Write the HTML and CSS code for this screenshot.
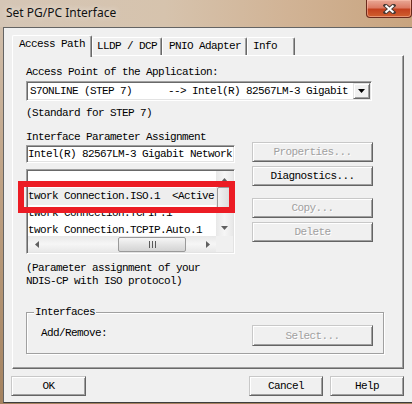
FILE: index.html
```html
<!DOCTYPE html>
<html>
<head>
<meta charset="utf-8">
<link rel="stylesheet" href="styles.css">
</head>
<body>
<div class="window">
  <div class="titlebar">
    <span class="title">Set PG/PC Interface</span>
    <div class="close">
      <svg width="13" height="10" viewBox="0 0 13 10"><path d="M2.5 1.5 L10.5 8.5 M10.5 1.5 L2.5 8.5" stroke="#4a3a34" stroke-width="4" stroke-linecap="square"/><path d="M2.5 1.5 L10.5 8.5 M10.5 1.5 L2.5 8.5" stroke="#fff" stroke-width="2"/></svg>
    </div>
  </div>
  <div class="client">
    <div class="tabs">
      <div class="tab tab-active tab-access">Access Path</div>
      <div class="tab tab-lldp">LLDP / DCP</div>
      <div class="tab tab-pnio">PNIO Adapter</div>
      <div class="tab tab-info">Info</div>
    </div>
    <div class="panel">
      <div class="label">Access Point of the Application:</div>
      <div class="combo">
        <span class="combo-text">S7ONLINE (STEP 7)      --> Intel(R) 82567LM-3 Gigabit</span>
        <span class="combo-btn"><svg width="7" height="4" viewBox="0 0 7 4"><path d="M0 0 H7 L3.5 4 Z" fill="#000"/></svg></span>
      </div>
      <div class="label label-std">(Standard for STEP 7)</div>
      <div class="label label-assign">Interface Parameter Assignment</div>
      <div class="mid">
        <div class="mid-left">
          <div class="field">Intel(R) 82567LM-3 Gigabit Network</div>
          <div class="listbox">
            <div class="rows">
              <div class="row"></div>
              <div class="row row-focus">twork Connection.ISO.1  &lt;Active.</div>
              <div class="row">twork Connection.TCPIP.1</div>
              <div class="row">twork Connection.TCPIP.Auto.1</div>
            </div>
            <div class="vscroll">
              <div class="sb-arrow"><svg width="7" height="4" viewBox="0 0 7 4"><path d="M3.5 0 L7 4 H0 Z" fill="#606060"/></svg></div>
              <div class="vthumb"></div>
              <div class="sb-arrow sb-down"><svg width="7" height="4" viewBox="0 0 7 4"><path d="M0 0 H7 L3.5 4 Z" fill="#606060"/></svg></div>
            </div>
            <div class="hscroll">
              <div class="sb-arrow sb-h"><svg width="4" height="7" viewBox="0 0 4 7"><path d="M0 3.5 L4 0 V7 Z" fill="#606060"/></svg></div>
              <div class="hthumb"><svg width="7" height="7" viewBox="0 0 7 7"><path d="M0.5 0 V7 M3.5 0 V7 M6.5 0 V7" stroke="#5a5a5a" stroke-width="1"/></svg></div>
              <div class="sb-arrow sb-h sb-right"><svg width="4" height="7" viewBox="0 0 4 7"><path d="M0 0 L4 3.5 L0 7 Z" fill="#606060"/></svg></div>
            </div>
            <div class="corner"></div>
            <div class="highlight"></div>
          </div>
        </div>
        <div class="mid-right">
          <button class="btn btn-side" disabled>Properties...</button>
          <button class="btn btn-side btn-diag">Diagnostics...</button>
          <button class="btn btn-side btn-copy" disabled>Copy...</button>
          <button class="btn btn-side btn-delete" disabled>Delete</button>
        </div>
      </div>
      <div class="note">(Parameter assignment of your<br>NDIS-CP with ISO protocol)</div>
      <div class="group">
        <span class="legend">Interfaces</span>
        <span class="add">Add/Remove:</span>
        <button class="btn btn-side btn-select" disabled>Select...</button>
      </div>
    </div>
    <div class="footer">
      <button class="btn btn-ok">OK</button>
      <button class="btn btn-cancel">Cancel</button>
      <button class="btn btn-help">Help</button>
    </div>
  </div>
</div>
</body>
</html>
```

FILE: styles.css
```css
html, body {
  margin: 0;
  padding: 0;
}
body {
  width: 412px;
  height: 404px;
  overflow: hidden;
  font-family: "Liberation Mono", "DejaVu Sans Mono", monospace;
  font-size: 11px;
  letter-spacing: -0.6px;
  color: #000;
}
.window {
  width: 412px;
  height: 404px;
  box-sizing: border-box;
  padding-bottom: 1px;
  display: flex;
  flex-direction: column;
  background: linear-gradient(180deg, #d3c3b2 0%, #bfa284 45%, #a4825f 100%);
}
.titlebar {
  height: 27px;
  flex: none;
  display: flex;
  justify-content: space-between;
  align-items: flex-start;
  background: linear-gradient(90deg, #d5c6b6 0%, #d6c3ad 40%, #d1b395 70%, #c8a47f 100%);
}
.title {
  font-family: "Noto Sans", "Open Sans", sans-serif;
  font-size: 12px;
  letter-spacing: 0;
  line-height: 16px;
  padding: 5px 0 0 6px;
  color: #111;
  text-shadow: 0 0 6px rgba(255, 255, 255, 0.8);
}
.close {
  width: 46px;
  height: 18px;
  box-sizing: border-box;
  display: flex;
  align-items: center;
  justify-content: center;
  border: 1px solid #6b2a1c;
  border-top: none;
  border-radius: 0 0 4px 4px;
  background: linear-gradient(180deg, #e9a896 0%, #dc7b64 45%, #c4411f 55%, #d0602f 100%);
  box-shadow: inset 0 0 0 1px rgba(255, 200, 180, 0.5);
}
.client {
  flex: 1;
  margin-left: 3px;
  background: #f0f0f0;
  border-top: 1px solid #646464;
  border-left: 1px solid #646464;
  border-bottom: 1px solid #3c3c3c;
  padding: 7px 0 0 8px;
  display: flex;
  flex-direction: column;
}
.tabs {
  display: flex;
  align-items: flex-end;
  height: 20px;
}
.tab {
  box-sizing: border-box;
  height: 18px;
  line-height: 12px;
  padding-top: 2px;
  white-space: pre;
  background: #f0f0f0;
  border-top: 1px solid #fff;
  border-left: 1px solid #fff;
  border-right: 1px solid #696969;
  box-shadow: inset -1px 0 #a0a0a0;
  border-radius: 2px 2px 0 0;
}
.tab-active {
  height: 22px;
  margin-bottom: -2px;
  position: relative;
  z-index: 1;
  padding-top: 2px;
}
.tab-access { width: 80px; padding-left: 6px; }
.tab-lldp { width: 70px; padding-left: 4px; }
.tab-pnio { width: 85px; padding-left: 6px; }
.tab-info { width: 48px; padding-left: 5px; }
.panel {
  width: 392px;
  height: 314px;
  box-sizing: border-box;
  border: 1px solid;
  border-color: #fff #696969 #696969 #fff;
  box-shadow: inset -1px -1px #a0a0a0;
  padding: 10px 0 0 13px;
}
.label {
  height: 12px;
  line-height: 12px;
  white-space: pre;
}
.label-std { margin-top: 6px; }
.label-assign { margin-top: 12px; }
.sunken {
  background: #fff;
}
.combo, .field, .listbox {
  box-sizing: border-box;
  background: #fff;
  border: 1px solid;
  border-color: #a0a0a0 #fff #fff #a0a0a0;
  box-shadow: inset 1px 1px #696969, inset -1px -1px #e3e3e3;
}
.combo {
  margin-top: 3px;
  width: 346px;
  height: 20px;
  display: flex;
  align-items: center;
  padding: 1px 1px 1px 2px;
}
.combo-text {
  flex: 1;
  white-space: pre;
  line-height: 14px;
  padding-left: 1px;
  overflow: hidden;
}
.combo-btn {
  width: 17px;
  height: 16px;
  box-sizing: border-box;
  display: flex;
  align-items: center;
  justify-content: center;
  background: #f0f0f0;
  border: 1px solid;
  border-color: #e3e3e3 #696969 #696969 #e3e3e3;
  box-shadow: inset 1px 1px #fff, inset -1px -1px #a0a0a0;
}
.mid {
  margin-top: -1px;
  display: flex;
  gap: 17px;
}
.mid-left {
  width: 209px;
  padding-top: 3px;
}
.field {
  width: 209px;
  height: 18px;
  line-height: 16px;
  padding-left: 1px;
  white-space: pre;
  overflow: hidden;
}
.listbox {
  position: relative;
  margin-top: 6px;
  width: 209px;
  height: 85px;
  padding: 1px;
  display: grid;
  grid-template-columns: 1fr 17px;
  grid-template-rows: 1fr 16px;
}
.rows {
  overflow: hidden;
  min-height: 0;
}
.row {
  height: 17px;
  line-height: 17px;
  white-space: pre;
  overflow: hidden;
}
.row-focus {
  background: #eeeeee;
}
.vscroll {
  display: flex;
  flex-direction: column;
  background: linear-gradient(90deg, #e8e8e8, #f6f6f6 50%, #e8e8e8);
  min-height: 0;
}
.sb-arrow {
  flex: none;
  width: 17px;
  height: 17px;
  display: flex;
  align-items: center;
  justify-content: center;
}
.sb-down {
  margin-top: auto;
}
.vthumb {
  margin-top: -1px;
  margin-left: 1px;
  width: 14px;
  height: 22px;
  box-sizing: border-box;
  border: 1px solid #9a9a9a;
  border-radius: 2px;
  background: linear-gradient(90deg, #f2f2f2, #dcdcdc);
}
.hscroll {
  display: flex;
  align-items: center;
  background: linear-gradient(180deg, #e8e8e8, #f6f6f6 50%, #e8e8e8);
}
.sb-h {
  height: 16px;
}
.sb-right {
  margin-left: auto;
}
.hthumb {
  margin-left: 73px;
  width: 68px;
  height: 15px;
  box-sizing: border-box;
  border: 1px solid #9a9a9a;
  border-radius: 2px;
  background: linear-gradient(180deg, #f6f6f6, #e4e4e4 50%, #d4d4d4);
  display: flex;
  align-items: center;
  justify-content: center;
}
.corner {
  background: #f0f0f0;
}
.highlight {
  position: absolute;
  left: -9px;
  top: 11px;
  width: 217px;
  height: 32px;
  box-sizing: border-box;
  border: 6px solid #ec1c24;
  pointer-events: none;
}
.mid-right {
  display: flex;
  flex-direction: column;
}
.btn {
  box-sizing: border-box;
  height: 20px;
  margin: 0;
  padding: 0;
  font: inherit;
  letter-spacing: inherit;
  color: #000;
  background: #f0f0f0;
  border: 1px solid;
  border-color: #c8c8c8 #646464 #646464 #c8c8c8;
  box-shadow: inset 1px 1px #fff, inset -1px -1px #a0a0a0;
  border-radius: 0;
  line-height: 16px;
  text-align: center;
}
.btn:disabled {
  color: #a0a0a0;
  text-shadow: 1px 1px #fff;
}
.btn-side {
  width: 121px;
}
.btn-diag { margin-top: 4px; }
.btn-copy { margin-top: 12px; }
.btn-delete { margin-top: 4px; }
.note {
  margin-top: 8px;
  line-height: 13px;
  white-space: pre;
}
.group {
  position: relative;
  margin-top: 24px;
  width: 358px;
  height: 42px;
  box-sizing: border-box;
  border: 1px solid #a0a0a0;
  box-shadow: inset 1px 1px #fff, 1px 1px #fff;
  padding: 12px 10px 0 14px;
  display: flex;
  align-items: flex-start;
}
.legend {
  position: absolute;
  left: 7px;
  top: -7px;
  line-height: 12px;
  padding: 0 1px;
  background: #f0f0f0;
}
.add {
  margin-top: 2px;
  line-height: 12px;
}
.btn-select {
  margin-left: auto;
  height: 21px;
}
.footer {
  display: flex;
  width: 392px;
  margin-top: 7px;
}
.btn-ok {
  width: 75px;
  margin-left: -1px;
}
.btn-cancel {
  width: 74px;
  margin-left: auto;
}
.btn-help {
  width: 74px;
  margin-left: 7px;
}
```
